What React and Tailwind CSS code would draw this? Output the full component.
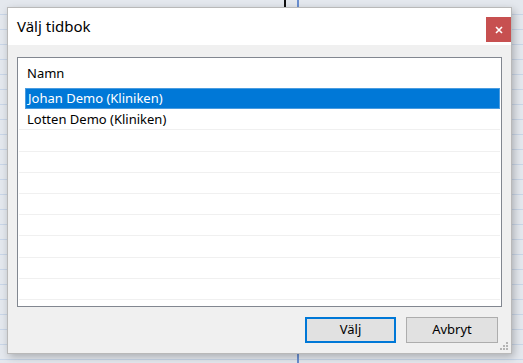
import React from "react";

const rows = ["Johan Demo (Kliniken)", "Lotten Demo (Kliniken)", "", "", "", "", "", "", "", ""];

const Grip = () => (
  <svg width="10" height="10" viewBox="0 0 10 10" className="absolute right-[2px] bottom-[2px]">
    {[
      [7, 1],
      [4, 4],
      [7, 4],
      [1, 7],
      [4, 7],
      [7, 7],
    ].map(([x, y], i) => (
      <rect key={i} x={x} y={y} width="2" height="2" fill="#b4b4b4" />
    ))}
  </svg>
);

const App = () => {
  return (
    <div className="relative w-[523px] h-[363px] overflow-hidden bg-[repeating-linear-gradient(to_bottom,#e4e8ee_0px,#e4e8ee_14px,#c9d6e8_14px,#c9d6e8_15px)] font-['Noto_Sans',sans-serif] text-black">
      {/* window behind */}
      <div className="absolute left-[284px] top-0 w-[2px] h-[8px] bg-[#111]"></div>
      <div className="absolute left-[297px] top-0 w-[2px] h-[8px] bg-[#6a8fd0]"></div>
      <div className="absolute left-[297px] bottom-0 w-[2px] h-[10px] bg-[#6a8fd0]"></div>

      <div className="relative pl-[7px] pt-[7px]">
        <div className="relative w-[505px] h-[347px] flex flex-col border border-[#b9b9b9] bg-[#f0f0f0] shadow-[2px_3px_8px_rgba(0,0,0,0.25)]">
          <div className="h-[37px] bg-white flex items-start justify-between">
            <span className="pl-[9px] pt-[8px] text-[15px] leading-[20px]">Välj tidbok</span>
            <button className="mt-[9px] w-[25px] h-[25px] bg-[#c75050] flex items-center justify-center">
              <svg width="8" height="8" viewBox="0 0 8 8">
                <path d="M1 1L7 7M7 1L1 7" stroke="white" strokeWidth="1.6" />
              </svg>
            </button>
          </div>

          <div className="flex-1 flex flex-col px-[9px] pt-[12px]">
            <div className="h-[250px] border border-[#828790] bg-white flex flex-col">
              <div className="h-[30px] flex items-center pl-[9px] pt-[2px] text-[13px]">Namn</div>
              <div className="flex flex-col px-[1px]">
                {rows.map((r, i) =>
                  i === 0 ? (
                    <div
                      key={i}
                      className="ml-[6px] h-[21.2px] flex items-center pl-[2px] pt-[1px] bg-[#0078d7] border border-[#4a9ce0] text-white text-[13px]"
                    >
                      {r}
                    </div>
                  ) : (
                    <div
                      key={i}
                      className="h-[21.2px] flex items-center pl-[8px] pt-[1px] border-b border-[#f0f0f0] text-[13px]"
                    >
                      {r}
                    </div>
                  )
                )}
              </div>
            </div>

            <div className="flex justify-end gap-[10px] mt-[10px] pr-[4px]">
              <button className="w-[91px] h-[26px] bg-[#e1e1e1] border-2 border-[#0078d7] text-[13px]">
                Välj
              </button>
              <button className="w-[92px] h-[26px] bg-[#e1e1e1] border border-[#adadad] text-[13px]">
                Avbryt
              </button>
            </div>
          </div>
          <Grip />
        </div>
      </div>
    </div>
  );
};

export default App;
